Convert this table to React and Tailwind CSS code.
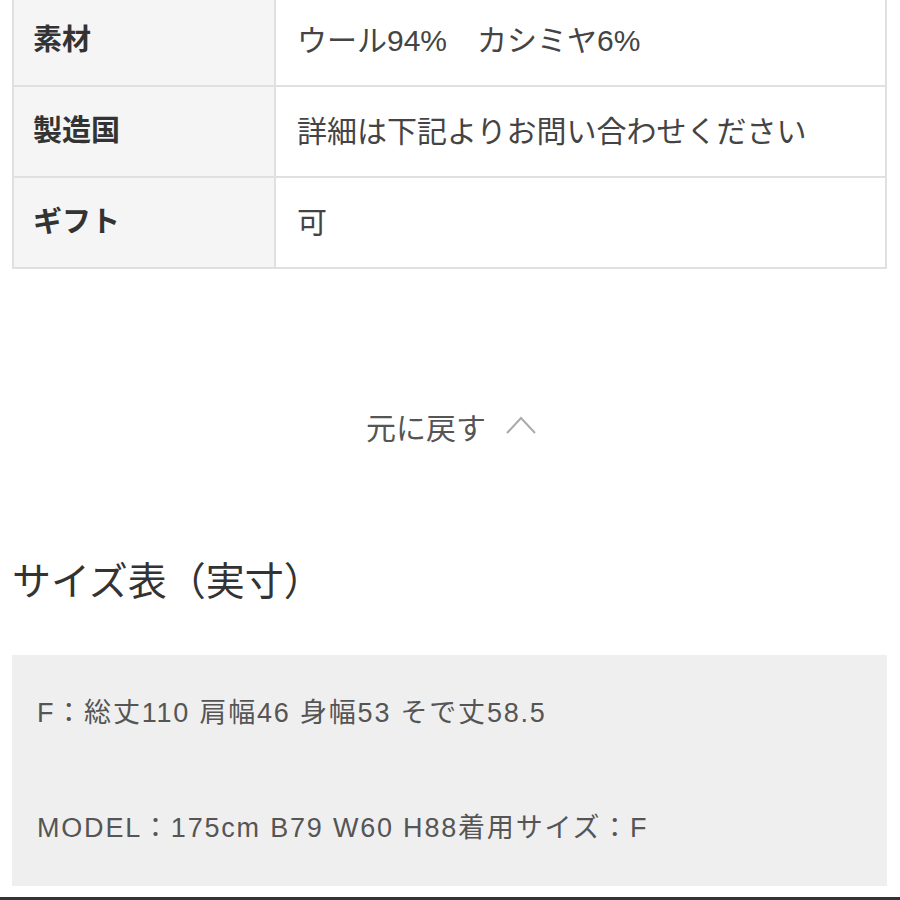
export default function App() {
  const rows = [
    ["素材", "ウール94%　カシミヤ6%"],
    ["製造国", "詳細は下記よりお問い合わせください"],
    ["ギフト", "可"],
  ];
  return (
    <div
      className="w-[900px] h-[900px] bg-white overflow-hidden relative text-[#333]"
      style={{ fontFamily: '"Liberation Sans", "Noto Sans CJK JP", sans-serif' }}
    >
      <table className="ml-[12px] mt-[-6px] w-[875px] border-collapse">
        <tbody>
          {rows.map(([k, v]) => (
            <tr key={k} className="h-[91px]">
              <td className="w-[262px] border-2 border-[#e0e0e0] bg-[#f5f5f5] pl-[19px] text-[29px] font-bold text-[#333] align-middle">
                {k}
              </td>
              <td className="border-2 border-[#e0e0e0] bg-white pl-[21px] text-[30px] text-[#444] align-middle">
                {v}
              </td>
            </tr>
          ))}
        </tbody>
      </table>

      <div className="mt-[145px] flex items-center justify-center gap-[20px] pl-[2px]">
        <span className="text-[30px] text-[#555] leading-none">元に戻す</span>
        <svg width="30" height="18" viewBox="0 0 30 18" className="mt-[-8px]">
          <polyline points="1,17 15,2 29,17" fill="none" stroke="#aaa" strokeWidth="2" />
        </svg>
      </div>

      <h2 className="mt-[118px] ml-[12px] text-[39px] font-normal text-[#333] leading-none">
        サイズ表（実寸）
      </h2>

      <div className="mt-[54px] ml-[12px] w-[875px] h-[231px] bg-[#efefef] pl-[25px] pt-[43px] text-[27px] tracking-[1.8px] text-[#555]">
        <p className="leading-[30px]">F：総丈110 肩幅46 身幅53 そで丈58.5</p>
        <p className="leading-[30px] mt-[85px]">MODEL：175cm B79 W60 H88着用サイズ：F</p>
      </div>

      <div className="absolute left-0 right-0 top-[897px] h-[3px] bg-[#333]" />
    </div>
  );
}
